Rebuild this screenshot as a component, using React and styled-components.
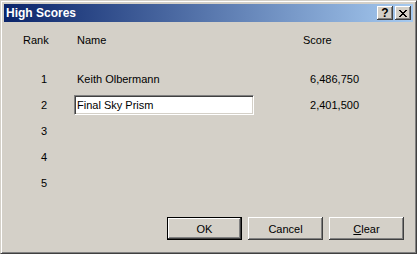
import React from "react";
import styled, { createGlobalStyle } from "styled-components";

const scores = [
  { rank: 1, name: "Keith Olbermann", score: "6,486,750" },
  { rank: 2, name: "Final Sky Prism", score: "2,401,500", editing: true },
  { rank: 3 },
  { rank: 4 },
  { rank: 5 },
];

const App = () => {
  return (
    <>
      <GlobalStyle />
      <Window>
        <TitleBar>
          <Title>High Scores</Title>
          <CaptionButtons>
            <CaptionButton aria-label="Help">
              <HelpMark>?</HelpMark>
            </CaptionButton>
            <CaptionButton aria-label="Close" $gap>
              <svg width="8" height="7" viewBox="0 0 8 7" shapeRendering="crispEdges">
                <path
                  d="M0 0h2v1h-2zM6 0h2v1h-2zM1 1h2v1h-2zM5 1h2v1h-2zM2 2h4v1h-4zM3 3h2v1h-2zM2 4h4v1h-4zM1 5h2v1h-2zM5 5h2v1h-2zM0 6h2v1h-2zM6 6h2v1h-2z"
                  fill="#000"
                />
              </svg>
            </CaptionButton>
          </CaptionButtons>
        </TitleBar>
        <Body>
          <ScoreTable>
            <HeadCell>Rank</HeadCell>
            <HeadCell $indent>Name</HeadCell>
            <HeadCell>Score</HeadCell>
            {scores.map((row) => (
              <React.Fragment key={row.rank}>
                <RankNum>{row.rank}</RankNum>
                {row.editing ? (
                  <NameInput defaultValue={row.name} />
                ) : (
                  <NameText>{row.name || ""}</NameText>
                )}
                <ScoreText>{row.score || ""}</ScoreText>
              </React.Fragment>
            ))}
          </ScoreTable>
          <Footer>
            <PushButton $default>OK</PushButton>
            <PushButton>Cancel</PushButton>
            <PushButton>
              <u>C</u>lear
            </PushButton>
          </Footer>
        </Body>
      </Window>
    </>
  );
};

const GlobalStyle = createGlobalStyle`
  html, body {
    margin: 0;
    padding: 0;
    background: #d4d0c8;
  }
  * {
    box-sizing: border-box;
  }
`;

const Window = styled.div`
  width: 417px;
  height: 254px;
  display: flex;
  flex-direction: column;
  padding: 3px;
  background: #d4d0c8;
  border: 1px solid;
  border-color: #d4d0c8 #404040 #404040 #d4d0c8;
  box-shadow: inset 1px 1px 0 #ffffff, inset -1px -1px 0 #808080;
  font-family: "Liberation Sans", Arial, sans-serif;
  font-size: 11px;
  color: #000;
`;

const TitleBar = styled.div`
  height: 18px;
  flex-shrink: 0;
  display: flex;
  align-items: center;
  justify-content: space-between;
  padding: 0 2px;
  background: linear-gradient(to right, #0a246a, #a6caf0);
`;

const Title = styled.span`
  color: #ffffff;
  font-weight: bold;
  font-size: 12px;
  line-height: 14px;
`;

const CaptionButtons = styled.div`
  display: flex;
  align-items: center;
`;

const CaptionButton = styled.button`
  width: 16px;
  height: 14px;
  padding: 0;
  margin-left: ${({ $gap }) => ($gap ? "2px" : "0")};
  border: none;
  display: flex;
  align-items: center;
  justify-content: center;
  background: #d4d0c8;
  box-shadow: inset -1px -1px 0 #404040, inset 1px 1px 0 #ffffff,
    inset -2px -2px 0 #808080, inset 2px 2px 0 #d4d0c8;
`;

const HelpMark = styled.span`
  font-family: "Liberation Sans", Arial, sans-serif;
  font-weight: bold;
  font-size: 12px;
  line-height: 12px;
  margin-top: -1px;
`;

const Body = styled.div`
  flex: 1;
  display: flex;
  flex-direction: column;
  padding: 12px 9px 10px 19px;
`;

const ScoreTable = styled.div`
  display: grid;
  grid-template-columns: 51px 229px 56px;
  grid-template-rows: 32px repeat(5, 26px);
  align-items: center;
  line-height: 13px;
`;

const HeadCell = styled.div`
  align-self: start;
  padding-left: ${({ $indent }) => ($indent ? "3px" : "0")};
`;

const RankNum = styled.div`
  width: 24px;
  text-align: right;
`;

const NameText = styled.div`
  padding-left: 3px;
`;

const NameInput = styled.input`
  width: 180px;
  height: 20px;
  margin: 0;
  padding: 0 0 0 2px;
  border: 1px solid;
  border-color: #808080 #ffffff #ffffff #808080;
  box-shadow: inset 1px 1px 0 #404040, inset -1px -1px 0 #d4d0c8;
  background: #ffffff;
  font-family: "Liberation Sans", Arial, sans-serif;
  font-size: 11px;
  color: #000;
  outline: none;
`;

const ScoreText = styled.div`
  text-align: right;
`;

const Footer = styled.div`
  margin-top: auto;
  display: flex;
  justify-content: flex-end;
  gap: 6px;
`;

const PushButton = styled.button`
  width: 75px;
  height: 23px;
  padding: 0;
  background: #d4d0c8;
  font-family: "Liberation Sans", Arial, sans-serif;
  font-size: 11px;
  color: #000;
  border: ${({ $default }) => ($default ? "1px solid #000" : "none")};
  box-shadow: inset -1px -1px 0 #404040, inset 1px 1px 0 #ffffff,
    inset -2px -2px 0 #808080, inset 2px 2px 0 #d4d0c8;
`;

export default App;
